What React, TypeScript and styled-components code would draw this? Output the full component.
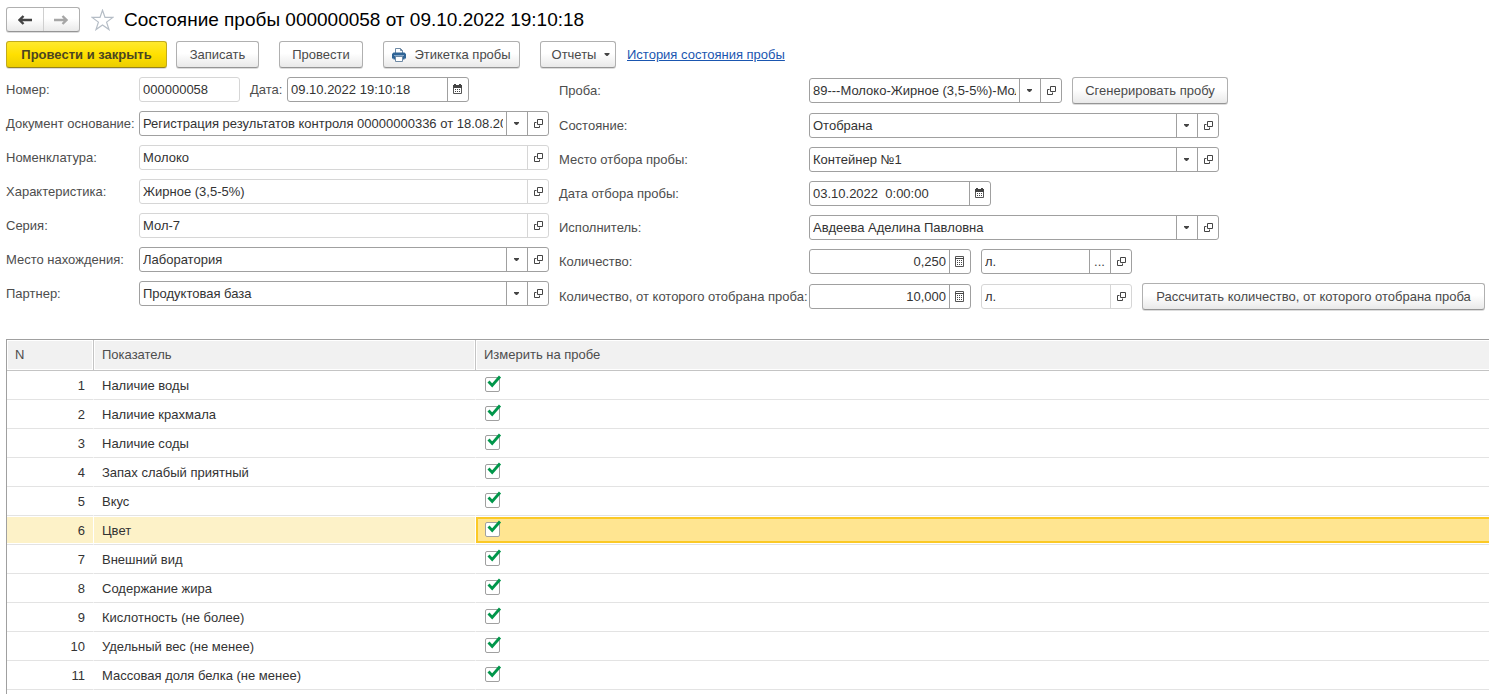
import React, { useState } from "react";
import styled, { createGlobalStyle, css } from "styled-components";

const GlobalStyle = createGlobalStyle`
  * { box-sizing: border-box; }
  body {
    margin: 0;
    background: #fff;
    color: #333;
    font-family: "Liberation Sans", Arial, sans-serif;
    font-size: 13px;
    line-height: 17px;
  }
  button, input { font: inherit; color: inherit; }
`;

const Page = styled.main`
  display: flex;
  flex-direction: column;
  min-height: 100vh;
  padding: 7px 0 0 6px;
`;

const TitleBar = styled.header`
  display: flex;
  align-items: center;
  height: 25px;
  margin-bottom: 9px;
`;

const raised = css`
  border: 1px solid #b0b0b0;
  border-bottom-color: #959595;
  border-radius: 3px;
  background: linear-gradient(#fff 45%, #e9e9e9);
  box-shadow: 0 1px 0 #dcdcdc;
`;

const NavGroup = styled.nav`
  ${raised}
  display: flex;
  width: 74px;
  height: 25px;
`;

const NavButton = styled.button`
  flex: 1;
  display: flex;
  align-items: center;
  justify-content: center;
  padding: 0;
  border: 0;
  background: none;
  color: #444;
  & + & {
    border-left: 1px solid #cfcfcf;
  }
  &:disabled {
    color: #a6a6a6;
  }
`;

const StarButton = styled.button`
  display: flex;
  padding: 0;
  margin: 0 10px 0 11px;
  border: 0;
  background: none;
`;

const Title = styled.h1`
  margin: 0;
  color: #000;
  font-size: 19px;
  font-weight: 400;
  line-height: 25px;
  white-space: nowrap;
`;

const Toolbar = styled.div`
  display: flex;
  align-items: center;
  gap: 20px;
  margin-bottom: 9px;
`;

const ButtonPair = styled.div`
  display: flex;
  gap: 9px;
`;

const LinkedPair = styled.div`
  display: flex;
  align-items: center;
  gap: 11px;
`;

const Button = styled.button<{ $width: number; $primary?: boolean; $menu?: boolean }>`
  ${raised}
  display: flex;
  align-items: center;
  justify-content: center;
  gap: 8px;
  flex: none;
  min-width: ${(p) => p.$width}px;
  height: 27px;
  padding: 0 0 0 ${(p) => (p.$menu ? 6 : 0)}px;
  color: #4a4a4a;
  white-space: nowrap;
  ${(p) =>
    p.$primary &&
    css`
      border-color: #c2ab1c;
      border-bottom-color: #96831a;
      background: linear-gradient(#ffe92e, #ffe000 50%, #ecce00);
      color: #4b4520;
      font-weight: 700;
    `}
`;

const HistoryLink = styled.a`
  color: #1a56b0;
  text-decoration: underline;
  white-space: nowrap;
`;

const Form = styled.form`
  display: grid;
  grid-template-columns: 543px minmax(0, 1fr);
  column-gap: 10px;
  align-items: start;
  margin-bottom: 29px;
`;

const Column = styled.div`
  display: flex;
  flex-direction: column;
  gap: 9px;
`;

const Row = styled.div<{ $label: number }>`
  display: grid;
  grid-template-columns: ${(p) => p.$label}px minmax(0, 1fr);
  align-items: center;
`;

const Controls = styled.div`
  display: flex;
  align-items: center;
  gap: 10px;
`;

const Label = styled.label`
  color: #4d4d4d;
  white-space: nowrap;
`;

const FieldBox = styled.div<{ $width: number; $readOnly?: boolean }>`
  --line: ${(p) => (p.$readOnly ? "#d6d6d6" : "#a0a0a0")};
  display: flex;
  flex: none;
  width: ${(p) => p.$width}px;
  height: 25px;
  border: 1px solid var(--line);
  border-radius: 3px;
  background: #fff;
`;

const TextInput = styled.input<{ $right?: boolean }>`
  flex: 1;
  min-width: 0;
  padding: 0 3px;
  border: 0;
  outline: 0;
  background: transparent;
  text-align: ${(p) => (p.$right ? "right" : "left")};
`;

const FieldButton = styled.button`
  display: flex;
  align-items: center;
  justify-content: center;
  flex: none;
  width: 21px;
  padding: 0 1px 1px 0;
  border: 0;
  border-left: 1px solid var(--line);
  background: none;
  color: #444;
`;

const TableArea = styled.section`
  flex: 1;
  border-top: 1px solid #a0a0a0;
  border-left: 1px solid #a0a0a0;
`;

const Table = styled.table`
  width: 100%;
  table-layout: fixed;
  border-collapse: separate;
  border-spacing: 0;
`;

const Head = styled.th<{ $width?: number }>`
  width: ${(p) => (p.$width ? `${p.$width}px` : "auto")};
  height: 31px;
  padding: 0 8px 2px;
  border-bottom: 1px solid #c4c4c4;
  background: #f1f1f1;
  box-shadow: inset 0 0 0 1px #fff;
  color: #4d4d4d;
  font-weight: 400;
  text-align: left;
  &:not(:last-child) {
    border-right: 1px solid #c4c4c4;
  }
  &:last-child {
    box-shadow: inset 1px 1px 0 #fff, inset 0 -1px 0 #fff;
  }
`;

const Cell = styled.td`
  padding: 1px 0;
  border-bottom: 1px solid #e3e3e3;
  &:not(:last-child) {
    border-right: 1px solid #fff;
  }
`;

const CellBody = styled.div<{ $right?: boolean; $selected?: boolean; $focused?: boolean }>`
  display: flex;
  align-items: center;
  justify-content: ${(p) => (p.$right ? "flex-end" : "flex-start")};
  height: 26px;
  padding: 0 8px;
  ${(p) => p.$selected && "background: #fdf2c8;"}
  ${(p) =>
    p.$focused &&
    css`
      padding-left: 6px;
      border: 2px solid #fbc926;
      border-right: 0;
      background: #ffe591;
    `}
`;

const CheckWrap = styled.span`
  position: relative;
  display: block;
  width: 15px;
  height: 15px;
  margin: 0 1px 2px;
  svg {
    position: absolute;
    left: 2px;
    top: -2px;
    pointer-events: none;
  }
  input:not(:checked) + svg {
    display: none;
  }
`;

const CheckInput = styled.input`
  appearance: none;
  display: block;
  width: 15px;
  height: 15px;
  margin: 0;
  border: 1px solid #a0a0a0;
  border-radius: 2px;
  background: #fff;
`;

const ArrowIcon = ({ flip }: { flip?: boolean }) => (
  <svg width="14" height="10" viewBox="0 0 14 10" aria-hidden="true">
    <g transform={flip ? "matrix(-1 0 0 1 14 0)" : undefined}>
      <path d="M5.5 1 1.5 5l4 4M2 5h12" fill="none" stroke="currentColor" strokeWidth="2.400" />
    </g>
  </svg>
);

const StarIcon = () => (
  <svg width="23" height="22" viewBox="0 0 23 22" aria-hidden="true">
    <path
      d="M11.5 1.2 14 8.4h7.9l-6.3 4.7 2.4 7.5-6.5-4.6L5 20.6l2.4-7.5L1.100 8.400H9z"
      fill="#fff"
      stroke="#b5bdc6"
      strokeWidth="1.200"
    />
  </svg>
);

const PrinterIcon = () => (
  <svg width="14" height="14" viewBox="0 0 14 14" aria-hidden="true">
    <path d="M3.500 5V.5h5l2 2V5" fill="#fff" stroke="#6d89a5" />
    <path d="M8.500.5v2h2" fill="none" stroke="#6d89a5" />
    <path d="M1.500 4.500h11L14 6v4.500h-1.500v1h-11v-1H0V6z" fill="#2f6496" />
    <path d="M2 7.500h10" stroke="#86a9ca" />
    <path d="M3.500 8.500h7v5h-7z" fill="#fff" stroke="#6d89a5" />
  </svg>
);

const CaretIcon = ({ wide }: { wide?: boolean }) => (
  <svg width={wide ? 6 : 5} height="3" viewBox="0 0 5 3" aria-hidden="true">
    <path d="M0 0h5v1L3 3H2L0 1z" fill="#444" />
  </svg>
);

const OpenIcon = () => (
  <svg width="11" height="9" viewBox="-2 0 11 9" aria-hidden="true">
    <path d="M3.500.5h5v5h-5z" fill="none" stroke="currentColor" />
    <path d="M2.500 3.500h-2v5h5v-2" fill="none" stroke="currentColor" />
  </svg>
);

const CalendarIcon = () => (
  <svg width="9" height="10" viewBox="0 0 9 10" aria-hidden="true">
    <path d="M.5 2.500h8v7h-8z" fill="#fff" stroke="#555" />
    <path d="M0 1h9v3H0zM1 0h2v2H1zM6 0h2v2H6z" fill="#444" />
    <path d="M2 5.500h5M2 7.500h5" stroke="#444" strokeDasharray="1 1" />
  </svg>
);

const CalculatorIcon = () => (
  <svg width="9" height="11" viewBox="0 0 9 11" aria-hidden="true">
    <path d="M.5.5h8v10h-8z" fill="#fff" stroke="#555" />
    <path d="M0 2.500h9" stroke="#444" />
    <path d="M2 4.500h5M2 6.500h5M2 8.500h5" stroke="#444" strokeDasharray="1 1" />
  </svg>
);

const CheckIcon = () => (
  <svg width="15" height="14" viewBox="0 0 15 14" aria-hidden="true">
    <path d="M1.500 6.500 5.200 10.500 13 1.500" fill="none" stroke="#00964a" strokeWidth="2.800" />
  </svg>
);

type Action = "list" | "open" | "calendar" | "calculator" | "dots";

const ACTIONS: Record<Action, { title: string; icon: React.ReactNode }> = {
  list: { title: "Выбрать из списка", icon: <CaretIcon /> },
  open: { title: "Открыть", icon: <OpenIcon /> },
  calendar: { title: "Календарь", icon: <CalendarIcon /> },
  calculator: { title: "Калькулятор", icon: <CalculatorIcon /> },
  dots: { title: "Выбрать", icon: "..." },
};

interface FieldProps {
  id: string;
  value: string;
  width?: number;
  actions?: Action[];
  readOnly?: boolean;
  right?: boolean;
  ariaLabel?: string;
}

const Field = ({ id, value, width = 410, actions = [], readOnly, right, ariaLabel }: FieldProps) => (
  <FieldBox $width={width} $readOnly={readOnly}>
    <TextInput id={id} defaultValue={value} readOnly={readOnly} $right={right} aria-label={ariaLabel} />
    {actions.map((a) => (
      <FieldButton key={a} type="button" aria-label={ACTIONS[a].title}>
        {ACTIONS[a].icon}
      </FieldButton>
    ))}
  </FieldBox>
);

const LabeledRow = ({
  id,
  label,
  labelWidth,
  children,
}: {
  id: string;
  label: string;
  labelWidth: number;
  children: React.ReactNode;
}) => (
  <Row $label={labelWidth}>
    <Label htmlFor={id}>{label}</Label>
    <Controls>{children}</Controls>
  </Row>
);

const LEFT_FIELDS: (FieldProps & { label: string })[] = [
  {
    id: "basis",
    label: "Документ основание:",
    value: "Регистрация результатов контроля 00000000336 от 18.08.2022 12:00:00",
    actions: ["list", "open"],
  },
  { id: "item", label: "Номенклатура:", value: "Молоко", actions: ["open"], readOnly: true },
  { id: "feature", label: "Характеристика:", value: "Жирное (3,5-5%)", actions: ["open"], readOnly: true },
  { id: "series", label: "Серия:", value: "Мол-7", actions: ["open"], readOnly: true },
  { id: "place", label: "Место нахождения:", value: "Лаборатория", actions: ["list", "open"] },
  { id: "partner", label: "Партнер:", value: "Продуктовая база", actions: ["list", "open"] },
];

const RIGHT_FIELDS: (FieldProps & { label: string })[] = [
  { id: "state", label: "Состояние:", value: "Отобрана", actions: ["list", "open"] },
  { id: "origin", label: "Место отбора пробы:", value: "Контейнер №1", actions: ["list", "open"] },
  { id: "taken", label: "Дата отбора пробы:", value: "03.10.2022  0:00:00", width: 182, actions: ["calendar"] },
  { id: "person", label: "Исполнитель:", value: "Авдеева Аделина Павловна", actions: ["list", "open"] },
];

const INDICATORS = [
  "Наличие воды",
  "Наличие крахмала",
  "Наличие соды",
  "Запах слабый приятный",
  "Вкус",
  "Цвет",
  "Внешний вид",
  "Содержание жира",
  "Кислотность (не более)",
  "Удельный вес (не менее)",
  "Массовая доля белка (не менее)",
];

const LEFT_LABEL = 133;
const RIGHT_LABEL = 250;

export default function App() {
  const [selected, setSelected] = useState(5);

  return (
    <>
      <GlobalStyle />
      <Page>
        <TitleBar>
          <NavGroup>
            <NavButton type="button" aria-label="Назад">
              <ArrowIcon />
            </NavButton>
            <NavButton type="button" aria-label="Вперед" disabled>
              <ArrowIcon flip />
            </NavButton>
          </NavGroup>
          <StarButton type="button" aria-label="Избранное">
            <StarIcon />
          </StarButton>
          <Title>Состояние пробы 000000058 от 09.10.2022 19:10:18</Title>
        </TitleBar>

        <Toolbar>
          <ButtonPair>
            <Button type="button" $width={161} $primary>
              Провести и закрыть
            </Button>
            <Button type="button" $width={83}>
              Записать
            </Button>
          </ButtonPair>
          <Button type="button" $width={84}>
            Провести
          </Button>
          <Button type="button" $width={137}>
            <PrinterIcon />
            Этикетка пробы
          </Button>
          <LinkedPair>
            <Button type="button" $width={76} $menu>
              Отчеты
              <CaretIcon wide />
            </Button>
            <HistoryLink href="#history">История состояния пробы</HistoryLink>
          </LinkedPair>
        </Toolbar>

        <Form onSubmit={(e) => e.preventDefault()}>
          <Column>
            <LabeledRow id="number" label="Номер:" labelWidth={LEFT_LABEL}>
              <Field id="number" value="000000058" width={101} readOnly />
              <Row $label={37}>
                <Label htmlFor="date">Дата:</Label>
                <Field id="date" value="09.10.2022 19:10:18" width={182} actions={["calendar"]} />
              </Row>
            </LabeledRow>
            {LEFT_FIELDS.map(({ label, ...field }) => (
              <LabeledRow key={field.id} id={field.id} label={label} labelWidth={LEFT_LABEL}>
                <Field {...field} />
              </LabeledRow>
            ))}
          </Column>

          <Column>
            <LabeledRow id="sample" label="Проба:" labelWidth={RIGHT_LABEL}>
              <Field id="sample" value="89---Молоко-Жирное (3,5-5%)-Мол-7" width={253} actions={["list", "open"]} />
              <Button type="button" $width={156}>
                Сгенерировать пробу
              </Button>
            </LabeledRow>
            {RIGHT_FIELDS.map(({ label, ...field }) => (
              <LabeledRow key={field.id} id={field.id} label={label} labelWidth={RIGHT_LABEL}>
                <Field {...field} />
              </LabeledRow>
            ))}
            <LabeledRow id="amount" label="Количество:" labelWidth={RIGHT_LABEL}>
              <Field id="amount" value="0,250" width={162} actions={["calculator"]} right />
              <Field id="unit" value="л." width={151} actions={["dots", "open"]} ariaLabel="Единица" />
            </LabeledRow>
            <LabeledRow id="total" label="Количество, от которого отобрана проба:" labelWidth={RIGHT_LABEL}>
              <Field id="total" value="10,000" width={162} actions={["calculator"]} right />
              <Field id="totalUnit" value="л." width={151} actions={["open"]} readOnly ariaLabel="Единица" />
              <Button type="button" $width={343}>
                Рассчитать количество, от которого отобрана проба
              </Button>
            </LabeledRow>
          </Column>
        </Form>

        <TableArea>
          <Table>
            <thead>
              <tr>
                <Head $width={87}>N</Head>
                <Head $width={382}>Показатель</Head>
                <Head>Измерить на пробе</Head>
              </tr>
            </thead>
            <tbody>
              {INDICATORS.map((name, i) => (
                <tr key={name} onClick={() => setSelected(i)}>
                  <Cell>
                    <CellBody $right $selected={i === selected}>
                      {i + 1}
                    </CellBody>
                  </Cell>
                  <Cell>
                    <CellBody $selected={i === selected}>{name}</CellBody>
                  </Cell>
                  <Cell>
                    <CellBody $focused={i === selected}>
                      <CheckWrap>
                        <CheckInput type="checkbox" defaultChecked aria-label={name} />
                        <CheckIcon />
                      </CheckWrap>
                    </CellBody>
                  </Cell>
                </tr>
              ))}
            </tbody>
          </Table>
        </TableArea>
      </Page>
    </>
  );
}
